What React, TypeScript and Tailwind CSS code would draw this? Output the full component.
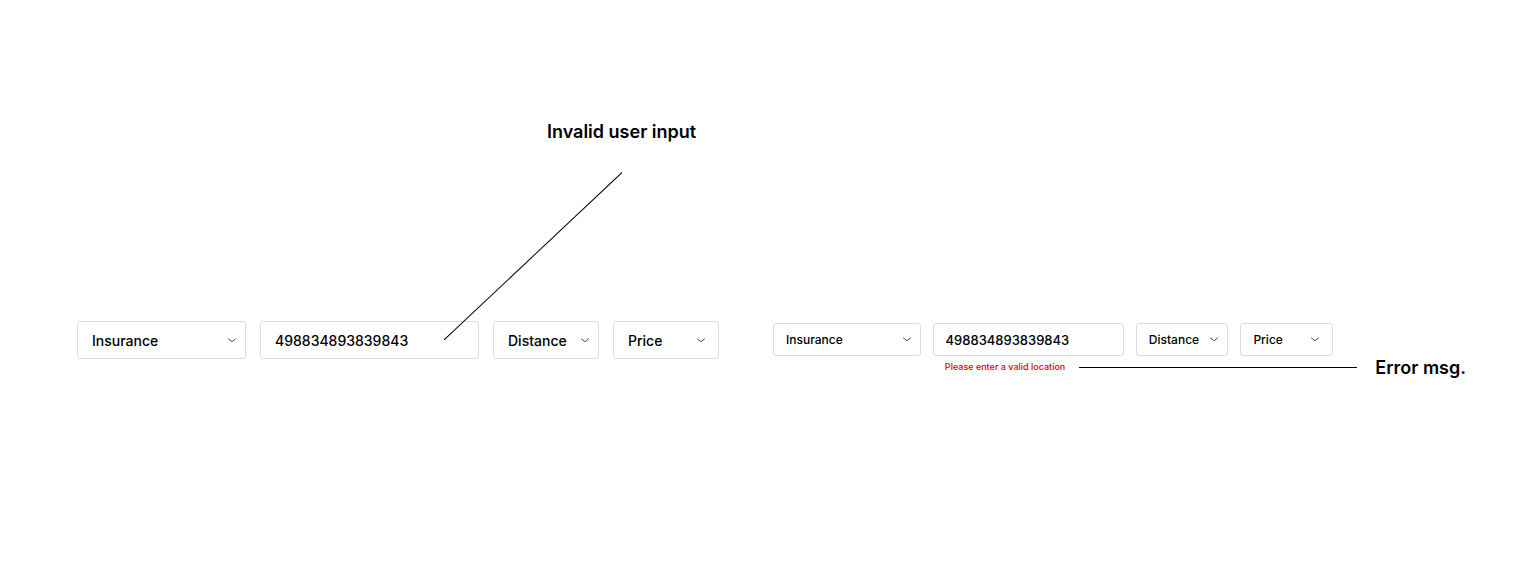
import React from "react";
import clsx from "clsx";

type Size = "lg" | "sm";

const boxStyles: Record<Size, string> = {
  lg: "h-[38px] pl-3.5",
  sm: "h-[33px] pl-3",
};

const selectText: Record<Size, string> = {
  lg: "text-[14px]",
  sm: "text-[12px]",
};

const inputText: Record<Size, string> = {
  lg: "text-[14px]",
  sm: "text-[13px]",
};

const rowStyles: Record<Size, string> = {
  lg: "gap-3.5",
  sm: "gap-3",
};

const box =
  "col-start-1 row-start-1 w-full min-w-0 appearance-none rounded-[3px] border border-[#dcdcdc] bg-white font-medium text-black outline-none focus:border-gray-500";

function Chevron({ wide }: { wide?: boolean }) {
  return (
    <svg
      aria-hidden="true"
      viewBox="0 0 10 6"
      className={clsx(
        "pointer-events-none col-start-1 row-start-1 w-2 self-center justify-self-end",
        wide ? "mr-3.5" : "mr-2.5",
      )}
      fill="none"
      stroke="#222"
      strokeWidth="1.1"
      strokeLinecap="round"
    >
      <path d="M0.7 1.2 L4.2 4.2 Q5 4.8 5.8 4.2 L9.3 1.2" />
    </svg>
  );
}

function Dropdown({ label, size, wide }: { label: string; size: Size; wide?: boolean }) {
  return (
    <div className="grid min-w-0">
      <select aria-label={label} className={clsx(box, boxStyles[size], selectText[size])}>
        <option>{label}</option>
      </select>
      <Chevron wide={wide} />
    </div>
  );
}

function FilterBar({ size, errorId }: { size: Size; errorId?: string }) {
  return (
    <div className={clsx("grid grid-cols-[169fr_219fr_106fr_106fr]", rowStyles[size])}>
      <Dropdown label="Insurance" size={size} />
      <div className="grid min-w-0">
        <input
          type="text"
          aria-label="Location"
          aria-invalid={errorId ? true : undefined}
          aria-describedby={errorId}
          defaultValue="498834893839843"
          className={clsx(box, boxStyles[size], inputText[size])}
        />
      </div>
      <Dropdown label="Distance" size={size} />
      <Dropdown label="Price" size={size} wide />
    </div>
  );
}

export default function App() {
  return (
    <main className="grid min-h-screen grid-cols-[642fr_693fr] items-start gap-[54px] bg-white pr-[58px] pl-[77px] font-['Inter',sans-serif] text-black">
      <section className="relative pt-[118px]">
        <h2 className="ml-[73.2%] text-lg leading-7 font-semibold whitespace-nowrap">
          Invalid user input
        </h2>
        <div className="mt-[175px]">
          <FilterBar size="lg" />
        </div>
        <svg
          aria-hidden="true"
          className="pointer-events-none absolute top-[172px] left-[57.1%] h-[168px] w-[27.8%]"
          viewBox="0 0 178 168"
          preserveAspectRatio="none"
        >
          <line x1="0" y1="168" x2="178" y2="0" stroke="#000" strokeWidth="1" />
        </svg>
      </section>

      <section className="pt-[323px]">
        <div className="w-[80.8%]">
          <FilterBar size="sm" errorId="location-error" />
        </div>
        <div className="flex items-center pl-[24.8%] whitespace-nowrap">
          <p id="location-error" className="text-[9px] leading-5 font-medium text-[#dd0000]">
            Please enter a valid location
          </p>
          <div className="mr-[18px] ml-3.5 h-px flex-1 bg-black" />
          <h2 className="pt-0.5 text-lg leading-5 font-semibold">Error msg.</h2>
        </div>
      </section>
    </main>
  );
}
